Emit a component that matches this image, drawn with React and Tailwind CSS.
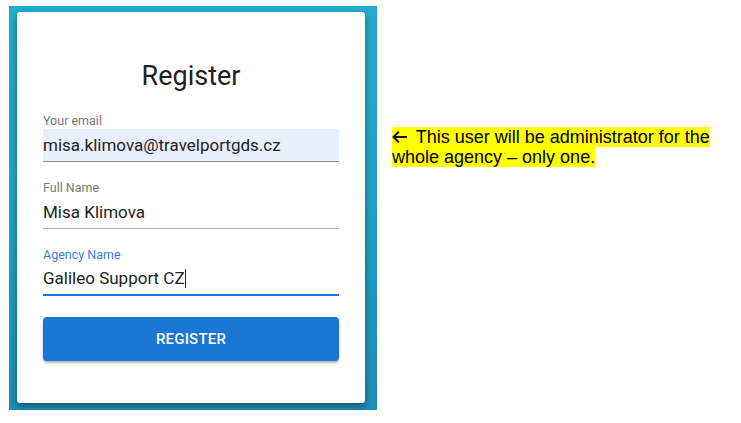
import React from "react";

export default function App() {
  return (
    <div className="flex w-[741px] h-[423px] bg-white overflow-hidden">
      <div className="ml-[9px] mt-[6px] w-[368px] h-[404px] pl-[8px] pt-[6px] bg-gradient-to-b from-[#24aacc] via-[#21a1c6] to-[#1c8db3]">
        <div className="w-[348px] h-[391px] bg-white rounded-[3px] shadow-[0_3px_6px_rgba(0,0,0,0.4)] px-[26px] pt-[47px] font-['Roboto',sans-serif]">
          <div className="h-[34px] leading-[34px] text-[27px] text-[#212121] text-center">Register</div>

          <div className="mt-[20px] h-[16px] leading-[16px] text-[12.5px] text-[#777777]">Your email</div>
          <div className="h-[33px] leading-[32px] text-[17px] text-[#222222] bg-[#e8f0fe] border-b border-[#8f8f8f]">
            misa.klimova@travelportgds.cz
          </div>

          <div className="mt-[18px] h-[16px] leading-[16px] text-[12.5px] text-[#777777]">Full Name</div>
          <div className="h-[33px] leading-[32px] text-[17px] text-[#222222] border-b border-[#a8a8a8]">
            Misa Klimova
          </div>

          <div className="mt-[18px] h-[16px] leading-[16px] text-[12.5px] text-[#3a7fdc]">Agency Name</div>
          <div className="h-[33px] leading-[31px] text-[17px] text-[#222222] border-b-2 border-[#1976d2] flex items-start">
            <span>Galileo Support CZ</span>
            <span className="inline-block w-px h-[19px] bg-[#222222] mt-[6px]"></span>
          </div>

          <div className="mt-[21px] h-[44px] leading-[44px] rounded-[4px] bg-[#1976d2] text-white text-[15px] font-medium text-center tracking-[0.2px] shadow-[0_2px_3px_rgba(0,0,0,0.3)]">
            REGISTER
          </div>
        </div>
      </div>

      <div className="ml-[15px] mt-[127px] w-[330px] text-[18px] leading-[20px] text-black font-['Liberation_Sans',Arial,sans-serif]">
        <span className="bg-[#ffff00]">
          <svg width="15" height="12" viewBox="0 0 15 12" className="inline-block align-baseline mr-[4px]" fill="none" stroke="#000" strokeWidth="1.8">
            <path d="M1.3 6H15" />
            <path d="M6.8 0.7L1.5 6L6.8 11.3" />
          </svg>{" "}This user will be administrator for the whole agency – only one.
        </span>
      </div>
    </div>
  );
}
